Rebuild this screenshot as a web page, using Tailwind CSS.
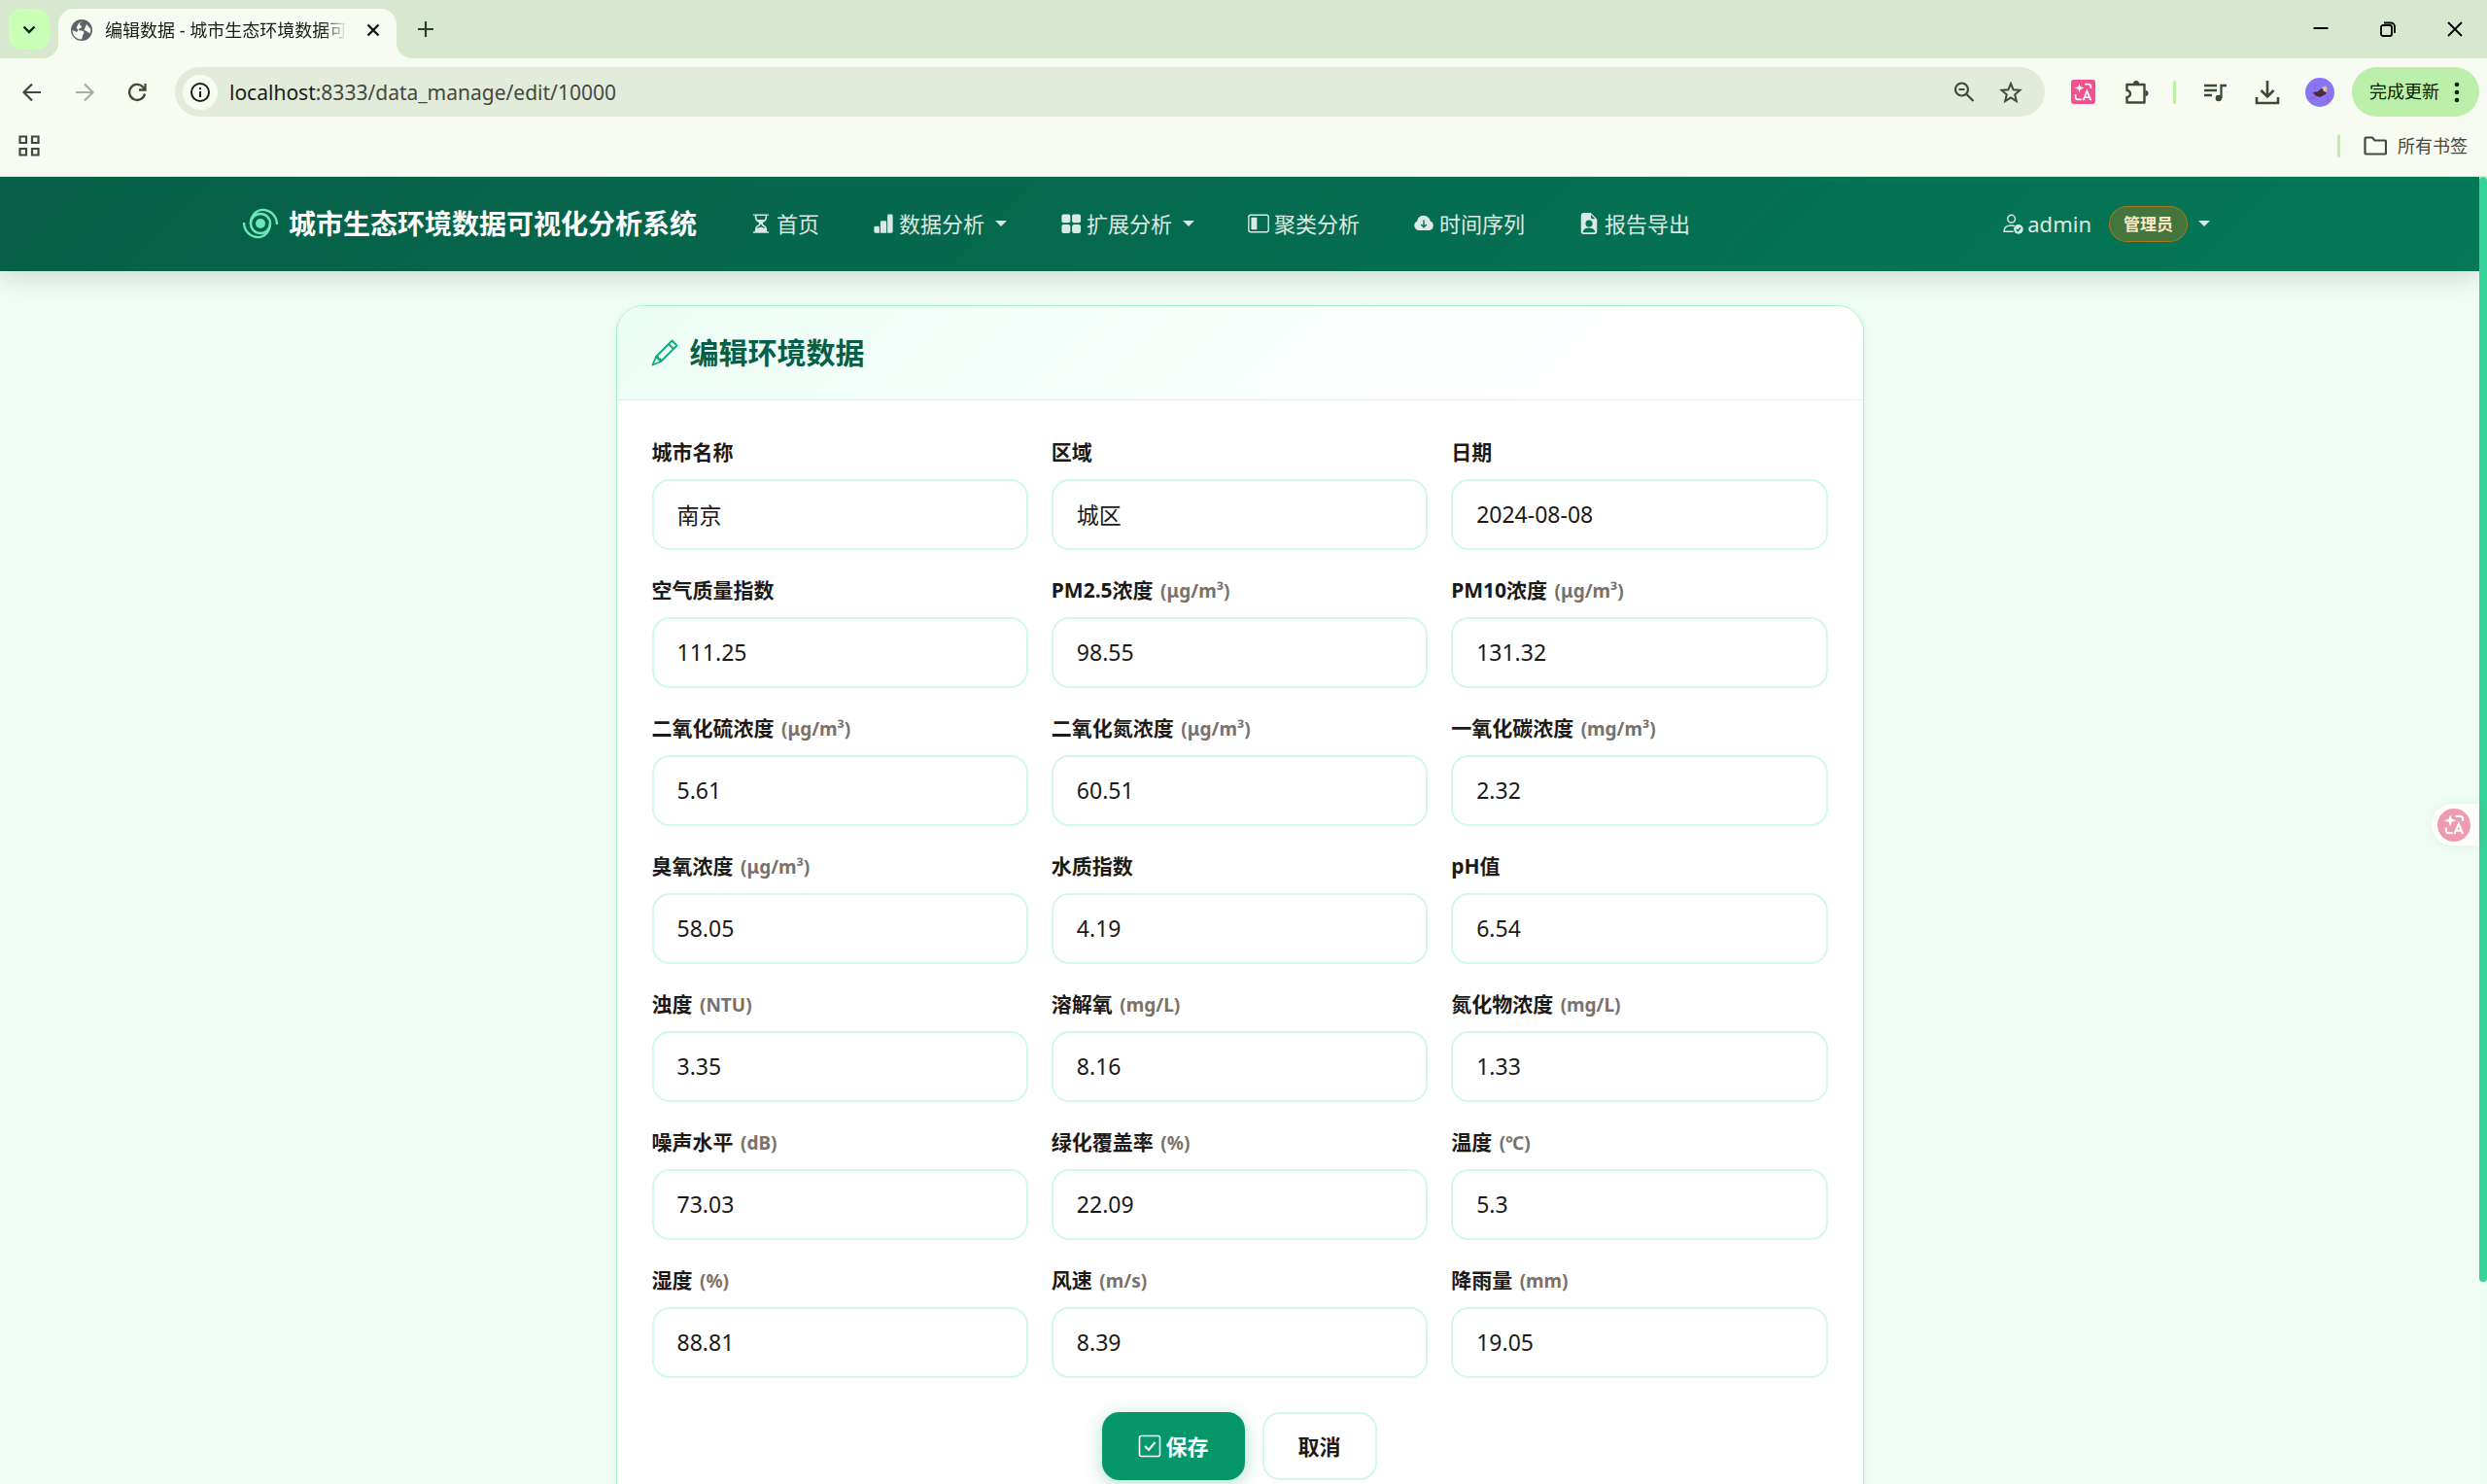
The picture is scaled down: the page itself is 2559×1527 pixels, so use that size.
<!DOCTYPE html>
<html lang="zh-CN">

<head>
  <meta charset="UTF-8" />
  <meta name="viewport" content="width=device-width, initial-scale=1.0" />
  <title>编辑数据 - 城市生态环境数据可视化分析系统</title>
  <script src="https://cdn.jsdelivr.net/npm/@tailwindcss/browser@4"></script>
</head>

<body class="flex h-screen flex-col overflow-hidden bg-[#f8fbf1] font-['Noto_Sans','Noto_Sans_CJK_SC',sans-serif] text-stone-900">

  <!-- Tab strip -->
  <div class="flex h-[60px] shrink-0 items-end bg-[#d8e8ce] pl-[9px]">
    <button aria-label="搜索标签页" class="mb-[9px] flex h-[42px] w-[42px] items-center justify-center rounded-[14px] bg-[#caffb8]">
      <svg class="h-5 w-5" viewBox="0 0 20 20" fill="none" stroke="#10200c" stroke-width="2.4"><path d="M4.5 7.5L10 13l5.500-5.500"/></svg>
    </button>
    <svg class="ml-[-7px] h-4 w-4" viewBox="0 0 16 16" fill="#f8fbf1"><path d="M16 0v16H0A16 16 0 0 0 16 0z"/></svg>
    <div class="flex h-[51px] w-[348px] items-center rounded-t-[16px] bg-[#f8fbf1] pb-[8px] pl-[12px] pr-[14px]">
      <svg class="h-[24px] w-[24px] shrink-0" viewBox="0 0 24 24"><circle cx="12" cy="12" r="11" fill="#5f6368"/><path d="M13 2.500c-1 1.500-3 1.500-3 3.500 0 1.500 2 1 2 2.500s-3 1.500-3 3 3 .5 4.500 1.500 1 2.500 0 3.500-.5 3-1.500 5C6 21.500 2.500 17 2.500 12l4.500 2 1.500-2-2-2.500L9 5zM17 6l4 4.500c.5 2 .3 3-.5 5L17 13l-2.500-1z" fill="#f8fbf1"/></svg>
      <span class="ml-[12px] whitespace-nowrap bg-gradient-to-r from-[#1a1c18] from-90% to-transparent bg-clip-text text-[18px] leading-6 text-transparent">编辑数据 - 城市生态环境数据可</span>
      <button aria-label="关闭标签页" class="ml-auto flex h-5 w-5 items-center justify-center">
        <svg class="h-4 w-4" viewBox="0 0 16 16" stroke="#10150e" stroke-width="2.400"><path d="M2.500 2.500l11 11M13.500 2.500l-11 11"/></svg>
      </button>
    </div>
    <svg class="h-4 w-4" viewBox="0 0 16 16" fill="#f8fbf1"><path d="M0 0v16h16A16 16 0 0 1 0 0z"/></svg>
    <button aria-label="新标签页" class="mb-[20px] ml-[4px] flex h-5 w-5 items-center justify-center">
      <svg class="h-4 w-4" viewBox="0 0 16 16" stroke="#2f4029" stroke-width="2.200"><path d="M8 0v16M0 8h16"/></svg>
    </button>
    <div class="mb-[21px] ml-auto mr-[24px] flex gap-[51px]">
      <button aria-label="最小化"><svg class="h-[18px] w-[18px]" viewBox="0 0 18 18" stroke="#000" stroke-width="2"><path d="M1.500 8h15"/></svg></button>
      <button aria-label="还原"><svg class="h-[18px] w-[18px]" viewBox="0 0 18 18" fill="none" stroke="#000" stroke-width="1.800"><rect x="2" y="5" width="11" height="11" rx="2"/><path d="M5 2.500h7a4 4 0 0 1 4 4V13"/></svg></button>
      <button aria-label="关闭"><svg class="h-[18px] w-[18px]" viewBox="0 0 18 18" stroke="#000" stroke-width="1.800"><path d="M2 2l14 14M16 2L2 16"/></svg></button>
    </div>
  </div>

  <!-- Address bar -->
  <div class="flex h-[69px] shrink-0 items-center pl-[21px] pr-[8px]">
    <div class="flex gap-[30px]">
      <button aria-label="后退"><svg class="h-6 w-6" viewBox="0 0 24 24" fill="none" stroke="#3c4b37" stroke-width="2.200"><path d="M21 12H4M12 3.500L3.500 12l8.500 8.500"/></svg></button>
      <button aria-label="前进"><svg class="h-6 w-6" viewBox="0 0 24 24" fill="none" stroke="#a9b0a4" stroke-width="2.200"><path d="M3 12h17M12 3.500l8.500 8.500-8.500 8.500"/></svg></button>
      <button aria-label="重新加载"><svg class="h-6 w-6" viewBox="0 0 24 24" fill="none" stroke="#3c4b37" stroke-width="2.300"><path d="M20 13.500a8 8 0 1 1-2-7l2.500 2.500M20.500 3v6.500H14"/></svg></button>
    </div>
    <div class="ml-[27px] flex h-[51px] flex-1 items-center rounded-full bg-[#e3ecda] pl-[8px] pr-[23px]">
      <span class="flex h-9 w-9 items-center justify-center rounded-full bg-[#f8fbf1]">
        <svg class="h-[22px] w-[22px]" viewBox="0 0 22 22" fill="none" stroke="#1a1c18" stroke-width="2"><circle cx="11" cy="11" r="9"/><path d="M11 10v6M11 6v2.200"/></svg>
      </span>
      <p class="ml-[12px] text-[21px] leading-7 text-[#43483f]"><span class="text-[#1a1c18]">localhost</span>:8333/data_manage/edit/10000</p>
      <div class="ml-auto flex gap-[24px]">
        <button aria-label="缩放"><svg class="h-6 w-6" viewBox="0 0 24 24" fill="none" stroke="#43483f" stroke-width="2.200"><circle cx="9.500" cy="9" r="6.500"/><path d="M14 13.500l7.500 7.500M6.500 9h6"/></svg></button>
        <button aria-label="加入书签"><svg class="h-6 w-6" viewBox="0 0 24 24" fill="none" stroke="#43483f" stroke-width="2"><path d="M12 3l2.600 6.300 6.800.6-5.200 4.400 1.600 6.700-5.800-3.600L6.200 21l1.600-6.700-5.200-4.400 6.800-.6z"/></svg></button>
      </div>
    </div>
    <div class="ml-[27px] flex items-center">
      <button aria-label="翻译" class="flex h-[25px] w-[25px] items-center justify-center rounded-[3px] bg-[#f2508f]">
        <svg class="h-[21px] w-[21px]" viewBox="0 0 24 24" fill="none" stroke="#fff" stroke-width="2"><path d="M7.500 2l1.400 4.100L13 7.500 8.900 8.900 7.500 13 6.100 8.900 2 7.500l4.100-1.400z" fill="#fff" stroke="none"/><path d="M14 3h4a3 3 0 0 1 3 3v2M3 15v3.500A2.500 2.500 0 0 0 5.500 21H10M12 22l4.500-11L21 22M13.500 18.500h6"/></svg>
      </button>
      <button aria-label="扩展程序" class="ml-[30px]"><svg class="h-[26px] w-[26px]" viewBox="0 0 26 26" fill="none" stroke="#3c4b37" stroke-width="2.400"><path d="M2.500 5h18v18.500h-18V18a3.500 3.500 0 0 0 0-7z" stroke-linejoin="round"/><path d="M9 4a3 3 0 0 1 6 0zM21.500 11a3 3 0 0 1 0 6z" fill="#3c4b37" stroke="none"/></svg></button>
      <span class="ml-[24px] h-6 w-[3px] rounded-full bg-[#bcf0aa]"></span>
      <button aria-label="媒体控件" class="ml-[28px]"><svg class="h-[24px] w-[24px]" viewBox="0 0 24 24" fill="none" stroke="#3c4b37" stroke-width="2.300"><path d="M1 5h13M1 10h13M1 15h8M18.500 18V5H24"/><circle cx="15.800" cy="18" r="3.200" fill="#3c4b37" stroke="none"/></svg></button>
      <button aria-label="下载内容" class="ml-[29px]"><svg class="h-[26px] w-[26px]" viewBox="0 0 26 26" fill="none" stroke="#3c4b37" stroke-width="2.600"><path d="M13 1v16M6.500 11l6.500 6.500 6.500-6.500M2 18v6h22v-6"/></svg></button>
      <button aria-label="个人资料" class="ml-[26px]"><svg class="h-[30px] w-[30px]" viewBox="0 0 30 30"><circle cx="15" cy="15" r="15" fill="#8877f5"/><path d="M5 22l9-4M10 6v6M23 19v6M6 15l3 2" stroke="#a55bc0" stroke-width="1.500"/><path d="M8 15l5-1 5-4 4-1 1 3-2 5-6 3-5-2z" fill="#4a2c3c"/><path d="M17 10l4-1.500 2 2.500-1 4-3-1z" fill="#e5b9a8"/></svg></button>
      <button class="ml-[18px] flex h-[51px] items-center rounded-full bg-[#bcf0aa] pl-[18px] pr-[16px] text-[18px] text-[#002201]">完成更新
        <svg class="ml-[11px] h-[24px] w-[14px]" viewBox="0 0 14 24" fill="#002201"><circle cx="7" cy="4" r="2.300"/><circle cx="7" cy="12" r="2.300"/><circle cx="7" cy="20" r="2.300"/></svg>
      </button>
    </div>
  </div>

  <!-- Bookmarks bar -->
  <div class="flex h-[53px] shrink-0 items-center border-b border-[#d9e3d3] pb-[10px] pl-[19px] pr-[20px]">
    <button aria-label="应用"><svg class="h-[22px] w-[22px]" viewBox="0 0 22 22" fill="none" stroke="#43483f" stroke-width="2.200"><path d="M1.500 1.500h6.500V8H1.500zM14 1.500h6.500V8H14zM1.500 14h6.500v6.500H1.500zM14 14h6.500v6.500H14z"/></svg></button>
    <span class="ml-auto h-6 w-[3px] rounded-full bg-[#bcf0aa]"></span>
    <button class="ml-[24px] flex items-center text-[18px] leading-6 text-[#43483f]">
      <svg class="mr-[11px] h-[20px] w-[24px]" viewBox="0 0 24 20" fill="none" stroke="#43483f" stroke-width="2.200"><path d="M1.500 2.500a1 1 0 0 1 1-1H9l2.500 3H22a1 1 0 0 1 1 1v12a1 1 0 0 1-1 1H2.500a1 1 0 0 1-1-1z"/></svg>
      所有书签
    </button>
  </div>

  <!-- Page viewport -->
  <div class="relative flex min-h-0 flex-1">
    <div class="min-w-0 flex-1 overflow-hidden bg-[#f0fdf4]">

      <!-- Navbar -->
      <header class="relative flex h-[97px] items-center bg-linear-135 from-[#065f46] to-[#047857] pb-[1px] pl-[249px] pr-[277px] text-[22px] leading-8 text-white/85 shadow-[0_4px_26px_rgba(0,0,0,0.17)]">
        <a href="/" class="flex items-center gap-[10px] text-[28px] font-bold text-white">
          <svg class="h-[38px] w-[38px]" viewBox="0 0 38 38" fill="none" stroke="#6ee7b7" stroke-width="2.400"><circle cx="19" cy="19" r="5" fill="#6ee7b7" stroke="none"/><circle cx="19" cy="19" r="10"/><path d="M2 18a15 15 0 0 0 13 15c8 1 14-6 14-14M36 20A15 15 0 0 0 23 5C15 4 9 11 9 19"/></svg>
          城市生态环境数据可视化分析系统
        </a>
        <nav class="ml-[55px] flex items-center gap-[55px]">
          <a href="/" class="flex items-center gap-[5px]">
            <svg class="h-[22px] w-[22px]" viewBox="0 0 16 16" fill="currentColor"><path d="M2 1.500a.5.500 0 0 1 .5-.5h11a.5.500 0 0 1 0 1h-1v1a4.500 4.500 0 0 1-2.560 4.060c-.29.140-.44.380-.44.590v.7c0 .21.150.45.440.59A4.500 4.500 0 0 1 12.500 13v1h1a.5.500 0 0 1 0 1h-11a.5.500 0 1 1 0-1h1v-1a4.500 4.500 0 0 1 2.560-4.060c.29-.14.440-.38.440-.59v-.7c0-.21-.15-.45-.44-.59A4.500 4.500 0 0 1 3.500 3V2h-1a.5.500 0 0 1-.5-.5"/><path d="M4.700 2.200h6.600v1a3.500 3.500 0 0 1-.6 1.800H5.300a3.500 3.500 0 0 1-.6-1.800zM7.600 8.600h.8c0 1.500 2 1.400 2.700 3L8 10.500l-3.100 1.100c.7-1.600 2.700-1.500 2.700-3z" fill="#056a4d"/></svg>首页
          </a>
          <button class="flex items-center gap-[5px]">
            <svg class="h-[22px] w-[22px]" viewBox="0 0 16 16" fill="currentColor"><path d="M1 11a1 1 0 0 1 1-1h2a1 1 0 0 1 1 1v4H2a1 1 0 0 1-1-1zM5.700 7a1 1 0 0 1 1-1h2.600a1 1 0 0 1 1 1v8H5.700zM11 2a1 1 0 0 1 1-1h2a1 1 0 0 1 1 1v12a1 1 0 0 1-1 1h-3z"/></svg>数据分析
            <svg class="ml-[6px] h-[6px] w-[12px]" viewBox="0 0 12 6" fill="currentColor"><path d="M0 0h12L6 6z"/></svg>
          </button>
          <button class="flex items-center gap-[5px]">
            <svg class="h-[22px] w-[22px]" viewBox="0 0 16 16" fill="currentColor"><rect x="1" y="1" width="6.500" height="6.500" rx="1.500"/><rect x="8.800" y="1" width="6.500" height="6.500" rx="1.500"/><rect x="1" y="8.800" width="6.500" height="6.500" rx="1.500"/><rect x="8.800" y="8.800" width="6.500" height="6.500" rx="1.500"/></svg>扩展分析
            <svg class="ml-[6px] h-[6px] w-[12px]" viewBox="0 0 12 6" fill="currentColor"><path d="M0 0h12L6 6z"/></svg>
          </button>
          <a href="#" class="flex items-center gap-[5px]">
            <svg class="h-[22px] w-[22px]" viewBox="0 0 16 16" fill="currentColor"><rect x=".6" y="1.600" width="14.800" height="12.800" rx="1.500" fill="none" stroke="currentColor"/><rect x="2.500" y="3.500" width="4.300" height="9" rx=".5"/></svg>聚类分析
          </a>
          <a href="#" class="flex items-center gap-[5px]">
            <svg class="h-[22px] w-[22px]" viewBox="0 0 16 16" fill="currentColor"><path d="M8 2a5 5 0 0 1 4.900 4.200A3.600 3.600 0 0 1 12.500 13H3.700A3.700 3.700 0 0 1 3 6.100 5.100 5.100 0 0 1 8 2z"/><path d="M8 5.500v5M6 8.700l2 2 2-2" fill="none" stroke="#05704f"/></svg>时间序列
          </a>
          <a href="#" class="flex items-center gap-[5px]">
            <svg class="h-[22px] w-[22px]" viewBox="0 0 16 16" fill="currentColor"><path d="M9.300 0H4a2 2 0 0 0-2 2v12a2 2 0 0 0 2 2h8a2 2 0 0 0 2-2V4.700zM9.500 1.500l3 3h-2a1 1 0 0 1-1-1z"/><circle cx="8" cy="8" r="2.600" fill="#047353"/><path d="M3.500 14c.6-2.300 2.500-2.800 4.500-2.800s3.900.5 4.500 2.800c0 .6-.4.800-.8.800H4.300c-.4 0-.8-.2-.8-.8z" fill="#047353"/></svg>报告导出
          </a>
        </nav>
        <button class="ml-auto flex items-center">
          <svg class="h-[22px] w-[22px]" viewBox="0 0 16 16" fill="none" stroke="currentColor" stroke-width="1.100"><circle cx="7" cy="4.500" r="2.800"/><path d="M8.500 14H1.500c0-3 2-4.500 5.500-4.500 1 0 1.800.1 2.500.4"/><circle cx="12.300" cy="12.300" r="3.500" fill="currentColor" stroke="none"/><path d="M10.700 12.300l1.200 1.200 2-2.400" stroke="#047857"/></svg>
          <span class="ml-[4px]">admin</span>
          <span class="ml-[18px] rounded-full border border-[#d97706]/70 bg-[#d97706]/30 px-[14px] text-[17px] font-bold leading-[35px] text-[#fde8c8]">管理员</span>
          <svg class="ml-[11px] h-[6px] w-[12px]" viewBox="0 0 12 6" fill="currentColor"><path d="M0 0h12L6 6z"/></svg>
        </button>
      </header>

      <!-- Edit card -->
      <main class="mx-auto mt-[35px] w-[1284px] max-w-full overflow-hidden rounded-[28px] border border-[#a7f3d0] bg-white shadow-[0_2px_8px_rgba(6,95,70,0.08)]">
        <div class="flex h-[97px] items-center gap-[12px] border-b border-[#d1fae5] bg-linear-135 from-[#ecfdf5] to-white to-80% px-[35px]">
          <svg class="h-[28px] w-[28px]" viewBox="0 0 28 28" fill="none" stroke="#10a878" stroke-width="1.800" stroke-linejoin="round"><path d="M21.500 1.500l5 5L10 23l-8.500 3.500L5 18zM18 5l5 5M5 18l5 5M5 18l2.500.5v2h2L10 23"/></svg>
          <h1 class="text-[30px] font-bold leading-10 text-[#065f46]">编辑环境数据</h1>
        </div>

        <form class="p-[36px]">
          <div class="grid grid-cols-3 gap-6 text-[21px] [&_input]:mt-[11px] [&_input]:block [&_input]:h-[73px] [&_input]:w-full [&_input]:rounded-[18px] [&_input]:border-2 [&_input]:border-[#d1fae5] [&_input]:bg-white [&_input]:px-[24px] [&_input]:pb-[2px] [&_input]:text-[23px] [&_label]:block [&_label]:h-[34px] [&_label]:font-bold [&_label]:leading-[34px] [&_small]:ml-[2px] [&_small]:text-[19px] [&_small]:text-stone-500">
            <div>
              <label for="city">城市名称</label>
              <input type="text" id="city" name="city" value="南京" />
            </div>
            <div>
              <label for="district">区域</label>
              <input type="text" id="district" name="district" value="城区" />
            </div>
            <div>
              <label for="date">日期</label>
              <input type="text" id="date" name="date" value="2024-08-08" />
            </div>
            <div>
              <label for="aqi">空气质量指数</label>
              <input type="text" id="aqi" name="aqi" value="111.25" />
            </div>
            <div>
              <label for="pm25">PM2.5浓度 <small>(μg/m³)</small></label>
              <input type="text" id="pm25" name="pm25" value="98.55" />
            </div>
            <div>
              <label for="pm10">PM10浓度 <small>(μg/m³)</small></label>
              <input type="text" id="pm10" name="pm10" value="131.32" />
            </div>
            <div>
              <label for="so2">二氧化硫浓度 <small>(μg/m³)</small></label>
              <input type="text" id="so2" name="so2" value="5.61" />
            </div>
            <div>
              <label for="no2">二氧化氮浓度 <small>(μg/m³)</small></label>
              <input type="text" id="no2" name="no2" value="60.51" />
            </div>
            <div>
              <label for="co">一氧化碳浓度 <small>(mg/m³)</small></label>
              <input type="text" id="co" name="co" value="2.32" />
            </div>
            <div>
              <label for="o3">臭氧浓度 <small>(μg/m³)</small></label>
              <input type="text" id="o3" name="o3" value="58.05" />
            </div>
            <div>
              <label for="waterQuality">水质指数</label>
              <input type="text" id="waterQuality" name="waterQuality" value="4.19" />
            </div>
            <div>
              <label for="ph">pH值</label>
              <input type="text" id="ph" name="ph" value="6.54" />
            </div>
            <div>
              <label for="turbidity">浊度 <small>(NTU)</small></label>
              <input type="text" id="turbidity" name="turbidity" value="3.35" />
            </div>
            <div>
              <label for="oxygen">溶解氧 <small>(mg/L)</small></label>
              <input type="text" id="oxygen" name="oxygen" value="8.16" />
            </div>
            <div>
              <label for="nitrogen">氮化物浓度 <small>(mg/L)</small></label>
              <input type="text" id="nitrogen" name="nitrogen" value="1.33" />
            </div>
            <div>
              <label for="noise">噪声水平 <small>(dB)</small></label>
              <input type="text" id="noise" name="noise" value="73.03" />
            </div>
            <div>
              <label for="green">绿化覆盖率 <small>(%)</small></label>
              <input type="text" id="green" name="green" value="22.09" />
            </div>
            <div>
              <label for="temperature">温度 <small>(℃)</small></label>
              <input type="text" id="temperature" name="temperature" value="5.3" />
            </div>
            <div>
              <label for="humidity">湿度 <small>(%)</small></label>
              <input type="text" id="humidity" name="humidity" value="88.81" />
            </div>
            <div>
              <label for="wind">风速 <small>(m/s)</small></label>
              <input type="text" id="wind" name="wind" value="8.39" />
            </div>
            <div>
              <label for="rain">降雨量 <small>(mm)</small></label>
              <input type="text" id="rain" name="rain" value="19.05" />
            </div>
          </div>

          <div class="mt-[35px] flex justify-center gap-[18px] text-[22px] font-bold">
            <button type="submit" class="flex h-[70px] items-center gap-[4px] rounded-[18px] bg-[#059669] px-[37px] text-white shadow-[0_4px_20px_rgba(5,150,105,0.3)]">
              <svg class="h-[24px] w-[24px]" viewBox="0 0 24 24" fill="none" stroke="currentColor" stroke-width="1.600"><rect x="1.500" y="1.500" width="21" height="21" rx="2"/><path d="M7 12l4 4 6.500-8" stroke-width="2"/></svg>保存
            </button>
            <button type="button" class="h-[70px] rounded-[18px] border-2 border-[#d1fae5] bg-white px-[35px]">取消</button>
          </div>
        </form>
      </main>
    </div>

    <!-- Scrollbar -->
    <div class="w-[8px] shrink-0 bg-[#ecfdf5]">
      <div class="h-[84.5%] rounded-[4px] bg-[#34d399]"></div>
    </div>

    <!-- Floating translate button -->
    <button aria-label="翻译此页" class="absolute right-[8px] top-[645px] flex h-[43px] w-[49px] items-center rounded-l-full bg-white pl-[6px] shadow-[0_0_14px_rgba(0,0,0,0.06)]">
      <span class="flex h-[34px] w-[34px] items-center justify-center rounded-full bg-[#ee9ab2]">
        <svg class="h-[23px] w-[23px]" viewBox="0 0 24 24" fill="none" stroke="#fff" stroke-width="2.200"><path d="M7.500 1l1.600 4.900L14 7.500 9.100 9.100 7.500 14 5.900 9.100 1 7.500l4.900-1.600z" fill="#fff" stroke="none"/><path d="M13 3h5a3 3 0 0 1 3 3v2M3 15v3.500A2.500 2.500 0 0 0 5.500 21H10M12 22l4.500-11L21 22M13.500 18.500h6"/></svg>
      </span>
    </button>
  </div>

</body>

</html>
